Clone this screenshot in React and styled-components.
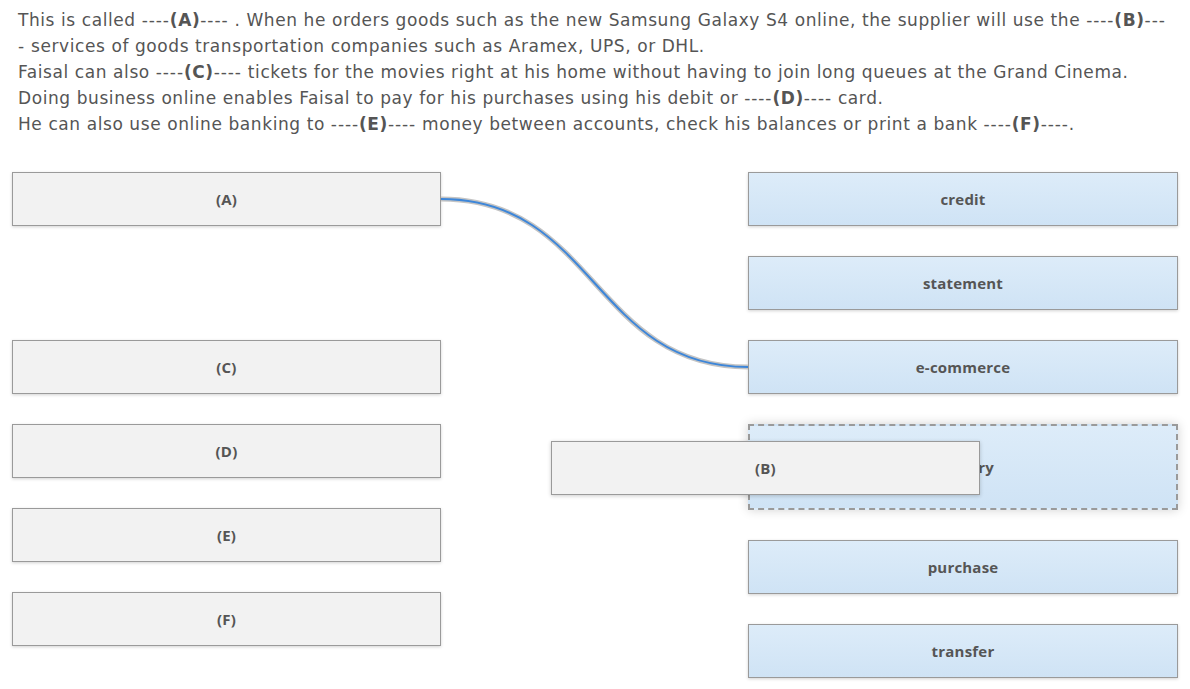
import React from "react";
import styled, { createGlobalStyle } from "styled-components";

const GlobalStyle = createGlobalStyle`
  body {
    margin: 0;
    background: #fff;
  }
`;

// each sentence: plain text, then the blank letter, then text, ...
const sentences = [
  [
    "This is called ", "A", " . When he orders goods such as the new Samsung Galaxy S4 online, the supplier will use the ",
    "B", " services of goods transportation companies such as Aramex, UPS, or DHL.",
  ],
  ["Faisal can also ", "C", " tickets for the movies right at his home without having to join long queues at the Grand Cinema."],
  ["Doing business online enables Faisal to pay for his purchases using his debit or ", "D", " card."],
  [
    "He can also use online banking to ", "E", " money between accounts, check his balances or print a bank ",
    "F", ".",
  ],
];

const leftItems = ["(A)", null, "(C)", "(D)", "(E)", "(F)"];
const rightItems = ["credit", "statement", "e-commerce", "delivery", "purchase", "transfer"];

function Blank({ letter }) {
  return (
    <>
      <Dash>----</Dash>
      <b>({letter})</b>
      <Dash>----</Dash>
    </>
  );
}

function App() {
  return (
    <Page>
      <GlobalStyle />
      <Passage>
        {sentences.map((parts, i) => (
          <Line key={i}>
            {parts.map((p, j) =>
              j % 2 ? <Blank key={j} letter={p} /> : <span key={j}>{p}</span>
            )}
          </Line>
        ))}
      </Passage>
      <Board>
        <Column>
          {leftItems.map((label, i) =>
            label ? <Source key={i}>{label}</Source> : <EmptySlot key={i} />
          )}
        </Column>
        <Column>
          {rightItems.map((label, i) => (
            <Target key={label} $hover={i === 3}>
              {label}
            </Target>
          ))}
        </Column>
        <Wires width="1166" height="520">
          <path
            d="M429 27 C583 27 582 195 736 195"
            fill="none"
            stroke="#c4c4c4"
            strokeWidth="5"
          />
          <path
            d="M429 27 C583 27 582 195 736 195"
            fill="none"
            stroke="#3d86d9"
            strokeWidth="2"
          />
        </Wires>
        <Dragged>(B)</Dragged>
      </Board>
    </Page>
  );
}

export default App;

const Page = styled.div`
  padding: 7px 12px 10px;
  font-family: "DejaVu Sans", Verdana, sans-serif;
  color: #555;
`;

const Passage = styled.div`
  padding-left: 6px;
  font-size: 17px;
  letter-spacing: 0.58px;
  line-height: 26px;
  width: 1151px;
`;

const Line = styled.div`
  b {
    font-weight: bold;
  }
`;

const Dash = styled.span`
  letter-spacing: 0.9px;
`;

const Board = styled.div`
  position: relative;
  margin-top: 35px;
  display: flex;
  justify-content: space-between;
  width: 1166px;
`;

const Column = styled.div`
  width: 430px;
  display: flex;
  flex-direction: column;
  gap: 30px;
`;

const Box = styled.div`
  box-sizing: border-box;
  height: 54px;
  display: flex;
  align-items: center;
  justify-content: center;
  border: 1px solid #9a9a9a;
  font-family: "Open Sans", "Noto Sans", sans-serif;
  font-weight: 700;
  font-size: 15px;
  letter-spacing: 0.2px;
  color: #555;
  box-shadow: 0 1px 3px rgba(0, 0, 0, 0.18);
`;

const Source = styled(Box)`
  width: 429px;
  background: #f2f2f2;
`;

const EmptySlot = styled.div`
  height: 54px;
`;

const Target = styled(Box)`
  background: linear-gradient(#ddecf9, #cfe3f5);
  height: ${(p) => (p.$hover ? "86px" : "54px")};
  border: ${(p) => (p.$hover ? "2px dashed #9a9a9a" : "1px solid #9a9a9a")};
  box-shadow: ${(p) =>
    p.$hover ? "0 0 10px rgba(0, 0, 0, 0.18)" : "0 1px 3px rgba(0, 0, 0, 0.18)"};
`;

const Wires = styled.svg`
  position: absolute;
  left: 0;
  top: 0;
  pointer-events: none;
  overflow: visible;
`;

const Dragged = styled(Source)`
  position: absolute;
  left: 539px;
  top: 269px;
  box-shadow: 0 1px 4px rgba(0, 0, 0, 0.2);
`;
